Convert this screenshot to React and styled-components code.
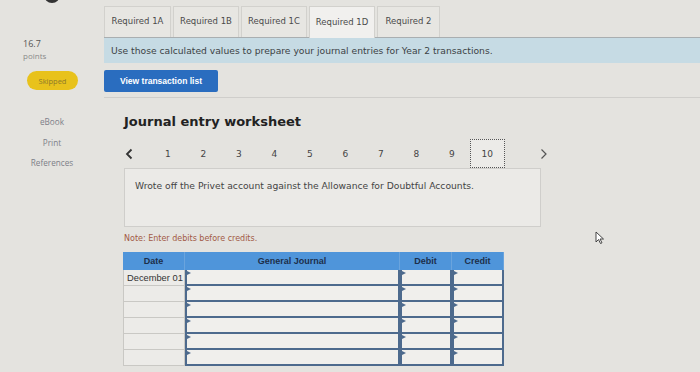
import React from "react";
import styled, { createGlobalStyle } from "styled-components";

const Global = createGlobalStyle`
  html, body { margin: 0; padding: 0; }
  body {
    background: #e4e3df;
    font-family: "DejaVu Sans", Verdana, sans-serif;
    width: 700px; height: 372px; overflow: hidden;
  }
`;

const Page = styled.div`
  display: flex;
  width: 700px;
  height: 372px;
  position: relative;
`;

const Sidebar = styled.aside`
  width: 104px;
  flex: none;
  display: flex;
  flex-direction: column;
  align-items: center;
  padding-top: 38px;
  box-sizing: border-box;
  font-family: "Open Sans", sans-serif;
`;

const Score = styled.div`
  align-self: flex-start;
  margin-left: 23px;
  line-height: 12px;
  color: #555;
  font-size: 9px;
  & span { display: block; color: #8a8a8a; font-size: 8px; }
`;

const Pill = styled.div`
  margin-top: 9px;
  margin-left: 1px;
  width: 51px;
  height: 19px;
  border-radius: 10px;
  background: #e8c21c;
  color: #8d7a2a;
  font-size: 7.5px;
  display: flex;
  align-items: center;
  justify-content: center;
`;

const SideLinks = styled.nav`
  margin-top: 22px;
  display: flex;
  flex-direction: column;
  align-items: center;
`;

const SideLink = styled.div`
  font-size: 8.2px;
  color: #7d7f88;
  height: ${(p) => p.$h}px;
  display: flex;
  align-items: center;
`;

const Main = styled.main`
  flex: 1;
  display: flex;
  flex-direction: column;
  padding-top: 6px;
`;

const Tabs = styled.div`
  display: flex;
  gap: 2px;
  height: 31px;
  align-items: stretch;
`;

const Tab = styled.div`
  width: ${(p) => p.$w}px;
  box-sizing: border-box;
  border: 1px solid #d2d1cd;
  border-bottom: none;
  background: ${(p) => (p.$active ? "#f1f0ee" : "#e7e6e2")};
  color: #4a4a4a;
  font-size: 8.5px;
  display: flex;
  align-items: center;
  justify-content: center;
  padding-bottom: 2px;
  margin-bottom: ${(p) => (p.$active ? "-1px" : "0")};
  position: relative;
  z-index: 1;
`;

const Banner = styled.div`
  border-top: 1px solid #a9aeb0;
  height: 25px;
  background: #c6dbe4;
  color: #3c4245;
  font-size: 9.2px;
  display: flex;
  align-items: center;
  padding-left: 7px;
`;

const ActionRow = styled.div`
  height: 35px;
  border-bottom: 1px solid #cfcecb;
  display: flex;
  align-items: flex-start;
  padding-top: 7px;
  box-sizing: border-box;
`;

const Button = styled.div`
  width: 114px;
  height: 22px;
  background: #2a6dbf;
  border-radius: 2px;
  color: #fff;
  font-family: "Liberation Sans", Arial, sans-serif;
  font-weight: bold;
  font-size: 8.5px;
  display: flex;
  align-items: center;
  justify-content: center;
`;

const Worksheet = styled.section`
  padding-left: 20px;
  display: flex;
  flex-direction: column;
`;

const Title = styled.h2`
  margin: 16px 0 0 0;
  font-size: 13px;
  font-weight: bold;
  color: #222;
  line-height: 16px;
`;

const Pager = styled.div`
  display: flex;
  align-items: center;
  height: 29px;
  margin-top: 9px;
`;

const Chevron = styled.div`
  width: ${(p) => p.$w}px;
  display: flex;
  justify-content: ${(p) => p.$justify};
  align-items: center;
`;

const PageNum = styled.div`
  width: 35.5px;
  height: 29px;
  box-sizing: border-box;
  display: flex;
  align-items: center;
  justify-content: center;
  font-size: 9px;
  color: #444;
  border: ${(p) => (p.$current ? "1px dotted #555" : "none")};
  background: ${(p) => (p.$current ? "#ecebe8" : "transparent")};
`;

const Description = styled.div`
  width: 417px;
  height: 59px;
  box-sizing: border-box;
  border: 1px solid #cfcecb;
  background: #ebeae7;
  color: #444;
  font-size: 9.2px;
  padding: 11px 0 0 10px;
`;

const Note = styled.div`
  margin-top: 7px;
  font-size: 8px;
  color: #a25a45;
  line-height: 10px;
`;

const Table = styled.div`
  margin-top: 8px;
  margin-left: -1px;
  display: grid;
  grid-template-columns: 62px 215px 52px 52px;
  grid-template-rows: 18px;
  grid-auto-rows: 16px;
  width: 381px;
`;

const Head = styled.div`
  background: #4f95da;
  border-right: 1px solid #6aa4dd;
  color: #1d2f4a;
  font-family: "Liberation Sans", Arial, sans-serif;
  font-weight: bold;
  font-size: 9px;
  display: flex;
  align-items: center;
  justify-content: center;
`;

const DateCell = styled.div`
  box-sizing: border-box;
  border: 1px solid #c9c8c4;
  border-top: none;
  background: #ecebe8;
  font-family: "Liberation Sans", Arial, sans-serif;
  font-size: 9.3px;
  color: #333;
  display: flex;
  align-items: center;
  padding-left: 3px;
`;

const InputCell = styled.div`
  box-sizing: border-box;
  border: 2px solid #4d6a8d;
  border-top: ${(p) => (p.$first ? "none" : "0")};
  background: #f0efec;
  position: relative;
  &::before {
    content: "";
    position: absolute;
    left: 0;
    top: 1px;
    border-left: 4px solid #4d6a8d;
    border-top: 2px solid transparent;
    border-bottom: 2px solid transparent;
  }
`;

const Cursor = styled.svg`
  position: absolute;
  left: 595px;
  top: 231px;
`;

const TopMark = styled.div`
  position: absolute;
  left: 44px;
  top: -6px;
  width: 16px;
  height: 9px;
  border-radius: 0 0 8px 8px;
  background: #333;
`;

const tabs = [
  ["Required 1A", 67],
  ["Required 1B", 66],
  ["Required 1C", 66],
  ["Required 1D", 66, true],
  ["Required 2", 63],
];

const rows = ["December 01", "", "", "", "", ""];

export default function App() {
  return (
    <Page>
      <Global />
      <TopMark />
      <Sidebar>
        <Score>
          16.7
          <span>points</span>
        </Score>
        <Pill>Skipped</Pill>
        <SideLinks>
          <SideLink $h={18}>eBook</SideLink>
          <SideLink $h={24}>Print</SideLink>
          <SideLink $h={16}>References</SideLink>
        </SideLinks>
      </Sidebar>
      <Main>
        <Tabs>
          {tabs.map(([t, w, a]) => (
            <Tab key={t} $w={w} $active={a}>
              {t}
            </Tab>
          ))}
        </Tabs>
        <Banner>
          Use those calculated values to prepare your journal entries for Year 2 transactions.
        </Banner>
        <ActionRow>
          <Button>View transaction list</Button>
        </ActionRow>
        <Worksheet>
          <Title>Journal entry worksheet</Title>
          <Pager>
            <Chevron $w={26} $justify="flex-start">
              <svg width="10" height="12" viewBox="0 0 10 12">
                <path d="M7.5 1.5 L3 6 L7.5 10.5" fill="none" stroke="#333" strokeWidth="1.8" />
              </svg>
            </Chevron>
            {[1, 2, 3, 4, 5, 6, 7, 8, 9, 10].map((n) => (
              <PageNum key={n} $current={n === 10}>
                {n}
              </PageNum>
            ))}
            <Chevron $w={44} $justify="flex-end">
              <svg width="10" height="12" viewBox="0 0 10 12">
                <path d="M2.5 1.5 L7 6 L2.5 10.5" fill="none" stroke="#555" strokeWidth="1.2" />
              </svg>
            </Chevron>
          </Pager>
          <Description>
            Wrote off the Privet account against the Allowance for Doubtful Accounts.
          </Description>
          <Note>Note: Enter debits before credits.</Note>
          <Table>
            <Head>Date</Head>
            <Head>General Journal</Head>
            <Head>Debit</Head>
            <Head>Credit</Head>
            {rows.map((d, i) => (
              <React.Fragment key={i}>
                <DateCell>{d}</DateCell>
                <InputCell $first={i === 0} />
                <InputCell />
                <InputCell />
              </React.Fragment>
            ))}
          </Table>
        </Worksheet>
      </Main>
      <Cursor width="10" height="14" viewBox="0 0 10 14">
        <path d="M1 1 L1 11 L3.5 8.5 L5.5 12.5 L7 11.8 L5 8 L8.5 8 Z" fill="#fff" stroke="#333" strokeWidth="0.9" />
      </Cursor>
    </Page>
  );
}
